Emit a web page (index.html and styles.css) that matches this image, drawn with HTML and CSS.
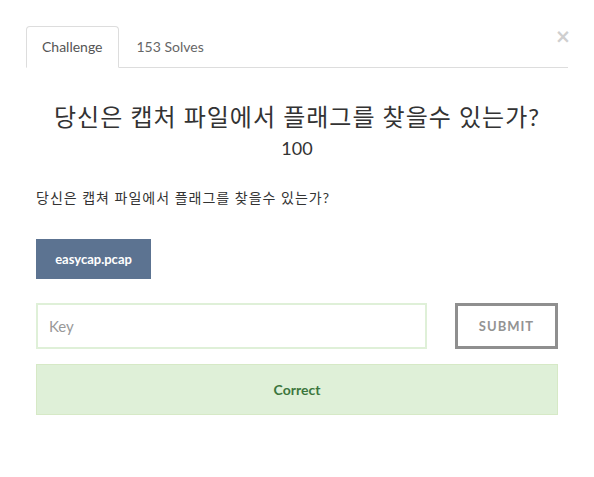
FILE: index.html
```html
<!DOCTYPE html>
<html lang="ko">
<head>
<meta charset="utf-8">
<title>Challenge</title>
<link rel="stylesheet" href="styles.css">
</head>
<body>
<div class="modal">
  <span class="close">&times;</span>
  <ul class="tabs">
    <li class="tab active">Challenge</li>
    <li class="tab">153 Solves</li>
  </ul>
  <div class="content">
    <h2 class="name">당신은 캡처 파일에서 플래그를 찾을수 있는가?</h2>
    <h4 class="value">100</h4>
    <p class="desc">당신은 캡쳐 파일에서 플래그를 찾을수 있는가?</p>
    <div class="files"><a class="file">easycap.pcap</a></div>
    <div class="submit-row">
      <input class="key" type="text" placeholder="Key">
      <button class="submit">Submit</button>
    </div>
    <div class="alert">Correct</div>
  </div>
</div>
</body>
</html>
```

FILE: styles.css
```css
* { box-sizing: border-box; }
html, body { margin: 0; background: #fff; }
body {
  font-family: Lato, "Noto Sans CJK KR", sans-serif;
  color: #333;
}
.modal {
  position: relative;
  width: 542px;
  margin-left: 26px;
  padding-top: 26px;
}
.close {
  position: absolute;
  right: -3px;
  top: 27px;
  font-size: 19px;
  font-weight: 700;
  line-height: 1;
  color: #cfcfcf;
  font-family: "DejaVu Sans", sans-serif;
}
.tabs {
  display: flex;
  list-style: none;
  margin: 0;
  padding: 0;
  border-bottom: 1px solid #ddd;
  height: 42px;
}
.tab {
  margin-right: 2px;
  padding: 10px 15px;
  font-size: 14px;
  line-height: 20px;
  color: #666;
  border: 1px solid transparent;
  border-radius: 4px 4px 0 0;
  height: 42px;
}
.tab.active {
  color: #555;
  background: #fff;
  border-color: #ddd #ddd transparent;
}
.content {
  padding: 0 10px;
}
.name {
  margin: 34px 0 0;
  font-size: 24px;
  line-height: 29px;
  font-weight: 400;
  letter-spacing: 1px;
  text-align: center;
  color: #333;
}
.value {
  margin: 7px 0 0;
  font-size: 18px;
  line-height: 20px;
  font-weight: 400;
  text-align: center;
  color: #333;
}
.desc {
  margin: 30px 0 0;
  font-size: 14px;
  line-height: 20px;
  letter-spacing: 1px;
}
.files {
  margin-top: 31px;
}
.file {
  display: inline-block;
  width: 115px;
  height: 40px;
  line-height: 40px;
  text-align: center;
  background: #5c7391;
  color: #fff;
  font-weight: 700;
  font-size: 13px;
}
.submit-row {
  margin-top: 24px;
  display: flex;
  justify-content: space-between;
}
.key {
  width: 391px;
  height: 46px;
  border: 2px solid #dff0d8;
  padding: 0 11px;
  font-family: Lato, sans-serif;
  font-size: 15px;
  color: #555;
  outline: none;
}
.key::placeholder { color: #999; }
.submit {
  width: 103px;
  height: 46px;
  border: 3px solid #8f8f8f;
  background: #fff;
  color: #939393;
  font-family: Lato, sans-serif;
  font-weight: 700;
  font-size: 13px;
  letter-spacing: 1px;
  text-transform: uppercase;
}
.alert {
  margin-top: 15px;
  height: 51px;
  line-height: 49px;
  background: #dff0d8;
  border: 1px solid #d6e9c6;
  color: #3c763d;
  font-weight: 700;
  font-size: 14px;
  text-align: center;
}
```
